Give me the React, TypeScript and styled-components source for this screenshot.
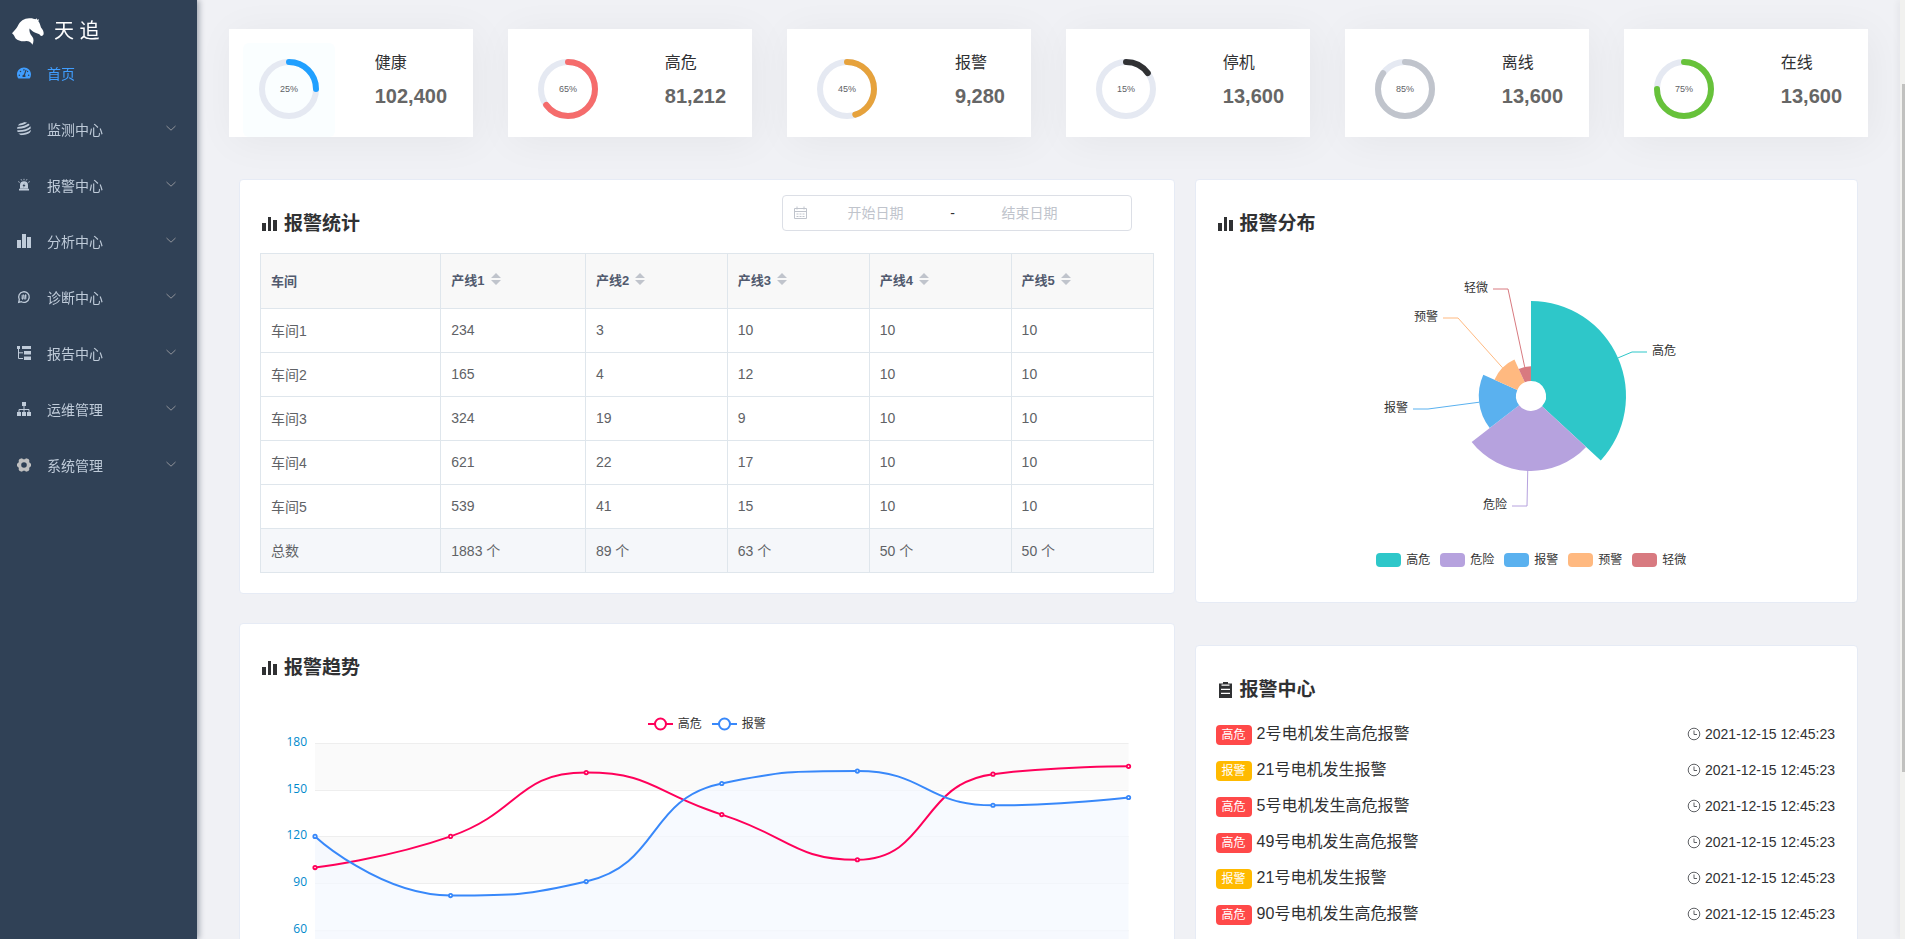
import React from "react";
import styled, { createGlobalStyle } from "styled-components";
import { FaTachometerAlt } from "react-icons/fa";

const GlobalStyle = createGlobalStyle`
  *, *::before, *::after { box-sizing: border-box; }
  body {
    margin: 0;
    font-family: "Liberation Sans", Arial, "Noto Sans CJK SC", sans-serif;
    font-size: 14px;
    color: #303133;
    background: #f0f2f5;
  }
  h1, h2, p, ul { margin: 0; padding: 0; }
  ul { list-style: none; }
  svg { display: block; flex: none; }
`;

/* ---------- shell ---------- */

const Shell = styled.div`
  display: flex;
  height: 100vh;
`;

const Sidebar = styled.aside`
  z-index: 1;
  flex: 0 0 197px;
  background: #304156;
  box-shadow: 2px 0 6px rgba(0, 21, 41, 0.35);
`;

const Brand = styled.h1`
  display: flex;
  align-items: center;
  gap: 10px;
  height: 45px;
  padding: 17px 12px 0;
  color: #fff;
  font-size: 20px;
  line-height: 28px;
  font-weight: 400;
`;

const NavLink = styled.a<{ $active?: boolean }>`
  display: flex;
  align-items: center;
  gap: 16px;
  height: 56px;
  padding: 0 21px 0 17px;
  color: ${(p) => (p.$active ? "#409eff" : "#bfcbd9")};
  text-decoration: none;
`;

const NavText = styled.span`
  flex: 1;
`;

const Main = styled.main`
  flex: 1;
  min-width: 0;
  padding: 29px 32px 30px;
  overflow-y: auto;
  scrollbar-width: none;
  background: #f0f1f5;
`;

const ScrollTrack = styled.div`
  display: grid;
  grid-template-rows: 84fr 688fr 167fr;
  flex: 0 0 5px;
  padding-left: 2px;
  background: #f1f1ef;
  box-shadow: -2px 0 6px rgba(0, 21, 41, 0.06);
`;

const ScrollThumb = styled.div`
  grid-row: 2;
  background: #c1c1bf;
`;

/* ---------- status cards ---------- */

const CardRow = styled.section`
  display: grid;
  grid-template-columns: repeat(6, minmax(0, 1fr));
  gap: 35px;
`;

const StatCard = styled.article`
  display: flex;
  justify-content: space-between;
  height: 108px;
  padding: 14px 26px 0 14px;
  background: #fff;
  box-shadow: 4px 4px 40px rgba(0, 0, 0, 0.05);
`;

const RingBox = styled.div<{ $tinted?: boolean }>`
  padding: 16px;
  border-radius: 6px;
  background: ${(p) => (p.$tinted ? "#fafeff" : "transparent")};
`;

const RingText = styled.text`
  font-size: 9px;
  fill: #606266;
  text-anchor: middle;
`;

const StatInfo = styled.div`
  padding-top: 11px;
`;

const StatLabel = styled.p`
  margin-bottom: 12px;
  font-size: 16px;
  line-height: 18px;
`;

const StatValue = styled.p`
  color: #666;
  font-size: 20px;
  line-height: 24px;
  font-weight: 700;
`;

/* ---------- panels ---------- */

const PanelGrid = styled.div`
  display: grid;
  grid-template-columns: minmax(0, 935fr) minmax(0, 663fr);
  align-items: start;
  gap: 20px;
  margin: 42px 10px 0;
`;

const Column = styled.div<{ $gap: number }>`
  display: flex;
  flex-direction: column;
  gap: ${(p) => p.$gap}px;
`;

const Panel = styled.section`
  padding: 15px 20px 20px;
  border: 1px solid #e6ebf5;
  border-radius: 4px;
  background: #fff;
`;

const PanelHeader = styled.header`
  display: flex;
  justify-content: space-between;
  align-items: flex-start;
  height: 58px;
`;

const PanelTitle = styled.h2`
  display: flex;
  align-items: center;
  gap: 6px;
  padding-top: 17px;
  font-size: 19px;
  line-height: 24px;
  font-weight: 700;
`;

const DateRange = styled.div`
  display: flex;
  align-items: center;
  width: 350px;
  height: 36px;
  margin-right: 22px;
  padding: 0 10px;
  border: 1px solid #dcdfe6;
  border-radius: 4px;
`;

const DateInput = styled.input`
  width: 136px;
  height: 28px;
  padding: 0;
  border: 0;
  outline: 0;
  background: none;
  color: #606266;
  font: inherit;
  text-align: center;
  &::placeholder { color: #c0c4cc; opacity: 1; }
`;

const DateSeparator = styled.span`
  width: 18px;
  text-align: center;
`;

/* ---------- table ---------- */

const Table = styled.table`
  width: 100%;
  border-collapse: collapse;
  table-layout: fixed;
  color: #606266;
`;

const HeadCell = styled.th`
  height: 55px;
  padding: 0 10px 2px;
  border: 1px solid #dfe6ec;
  background: #f8f8f8;
  color: #515a6e;
  font-size: 13px;
  text-align: left;
`;

const Cell = styled.td<{ $total?: boolean }>`
  height: 44px;
  padding: 0 10px 2px;
  border: 1px solid #dfe6ec;
  background: ${(p) => (p.$total ? "#f5f7fa" : "#fff")};
`;

const SortButton = styled.button`
  display: flex;
  align-items: center;
  gap: 6px;
  padding: 0 0 2px;
  border: 0;
  background: none;
  color: inherit;
  font: inherit;
  cursor: pointer;
`;

/* ---------- charts ---------- */

const ChartText = styled.text`
  font-size: 12px;
  fill: #333;
`;

const AxisText = styled.text`
  font-family: "Open Sans", sans-serif;
  font-size: 12px;
  fill: #008acd;
  text-anchor: end;
`;

const Legend = styled.ul`
  display: flex;
  justify-content: center;
  gap: 10px;
`;

const LegendItem = styled.li`
  display: flex;
  align-items: center;
  gap: 5px;
  height: 14px;
  color: #333;
  font-size: 12px;
  line-height: 14px;
`;

const Swatch = styled.i<{ $color: string }>`
  width: 25px;
  height: 14px;
  border-radius: 4px;
  background: ${(p) => p.$color};
`;

const PieBox = styled.div`
  display: flex;
  flex-direction: column;
  align-items: center;
  gap: 14px;
  padding: 0 0 15px 10px;
`;

const TrendBox = styled.div`
  padding-top: 20px;
`;

const TrendSvg = styled.svg`
  width: 100%;
  height: auto;
`;

/* ---------- alarm list ---------- */

const AlarmList = styled.ul`
  padding: 6px 2px 0 0;
`;

const AlarmRow = styled.li`
  display: flex;
  align-items: center;
  gap: 5px;
  height: 20px;
  margin-bottom: 16px;
`;

const Tag = styled.span<{ $danger: boolean }>`
  padding: 0 6px;
  border-radius: 4px;
  background: ${(p) => (p.$danger ? "#ff4949" : "#ffba00")};
  color: #fff;
  font-size: 12px;
  line-height: 20px;
`;

const AlarmText = styled.span`
  flex: 1;
  padding-bottom: 2px;
  font-size: 16px;
  line-height: 20px;
`;

const AlarmTime = styled.time`
  display: flex;
  align-items: center;
  gap: 4px;
  padding-bottom: 2px;
`;

/* ---------- icons ---------- */

const HorseLogo = () => (
  <svg width="32" height="27" viewBox="36 50 97 82" fill="currentColor" aria-hidden="true">
    <path d="M36 96C44 88 49 82 53 75 60 60 73 51 88 51 97 50 103 53 107 54L111 51 112 55 118 54 116 60C121 66 122 73 124 79 129 84 133 92 132 98 131 104 126 106 122 103 119 98 112 97 107 95 100 93 95 86 89 82 88 90 90 98 97 106 103 113 102 122 98 131 95 125 88 120 79 120 67 122 54 119 47 112 43 107 44 102 36 96Z" />
  </svg>
);

const GlobeIcon = () => (
  <svg width="14" height="14" viewBox="0 0 14 14" aria-hidden="true">
    <defs>
      <clipPath id="globe"><circle cx="7" cy="7" r="7" /></clipPath>
    </defs>
    <g clipPath="url(#globe)" fill="none" stroke="currentColor" strokeWidth="1.8">
      <path d="M1 2.600Q6 2.600 10 -.5M0 5.800Q8 6 13 1.500M0 9.100Q9 9.600 14.500 4.600M1 12.300Q10 12.800 15 8" />
    </g>
  </svg>
);

const SirenIcon = () => (
  <svg width="14" height="14" viewBox="0 0 14 14" aria-hidden="true">
    <path
      fill="currentColor"
      fillRule="evenodd"
      d="M3 10.500V7.200a4 4 0 0 1 8 0v3.300ZM7.500 5.200 5.500 8h1.200l-.3 1.800L8.500 7H7.200ZM2 10.800h10V12.500H2Z"
    />
    <path d="M7 .8v1.500M4 1.200l.8 1.300M10 1.200l-.8 1.300M1.300 3.600l1.400.8M12.700 3.600l-1.400.8" stroke="currentColor" strokeWidth=".9" />
  </svg>
);

const BarsIcon = () => (
  <svg width="14" height="14" viewBox="0 0 14 14" fill="currentColor" aria-hidden="true">
    <path d="M0 6h4v8H0zM5 0h4v14H5zM10 3h4v11h-4z" />
  </svg>
);

const HashIcon = () => (
  <svg width="14" height="14" viewBox="0 0 14 14" fill="none" stroke="currentColor" aria-hidden="true">
    <path strokeWidth="1.3" d="M1.700 12.300 2.300 9.600A5.300 5.300 0 1 1 4.400 11.700Z" />
    <path strokeWidth="1.100" d="M6.300 4.300 5.500 9.700M8.700 4.300 7.900 9.700M4.300 6h5.400M4.200 8h5.400" />
  </svg>
);

const TreeIcon = () => (
  <svg width="14" height="14" viewBox="0 0 14 14" aria-hidden="true">
    <path fill="currentColor" d="M0 0h3v3H0zM5 0h9v3H5zM7 5h7v3.500H7zM7 10.500h7V14H7z" />
    <path fill="none" stroke="currentColor" d="M1.500 3v9.500H6M1.500 6.800H6" />
  </svg>
);

const OrgIcon = () => (
  <svg width="14" height="14" viewBox="0 0 14 14" aria-hidden="true">
    <path fill="currentColor" d="M5 0h4v4H5zM0 10h4v4H0zM5 10h4v4H5zM10 10h4v4h-4z" />
    <path fill="none" stroke="currentColor" d="M7 4v6M2 10V7.500h10V10" />
  </svg>
);

const GearIcon = () => (
  <svg width="14" height="14" viewBox="0 0 14 14" fill="#c0c0c0" aria-hidden="true">
    <path
      fillRule="evenodd"
      d="M2.600 .9 5 .3 6 1.200H8L9 .3 11.400 .9 12.300 2.300 12.200 4 12.900 5 14 5.800V8.200L12.900 9 12.200 10 12.300 11.700 11.400 13.100 9 13.700 8 12.800H6L5 13.700 2.600 13.100 1.700 11.700 1.800 10 1.100 9 0 8.200V5.800L1.100 5 1.800 4 1.700 2.300ZM7 4.200a2.800 2.800 0 1 0 0 5.600 2.800 2.800 0 1 0 0-5.600Z"
    />
  </svg>
);

const Chevron = () => (
  <svg width="10" height="10" viewBox="0 0 10 10" fill="none" stroke="#909399" aria-hidden="true">
    <path d="M.5 2 5 6.200 9.500 2" />
  </svg>
);

const TitleBars = () => (
  <svg width="18" height="18" viewBox="0 0 18 18" fill="currentColor" aria-hidden="true">
    <path d="M2 8h4v8H2zM8 2h3v14H8zM13 5h4v11h-4z" />
  </svg>
);

const TitleClipboard = () => (
  <svg width="18" height="18" viewBox="0 0 18 18" aria-hidden="true">
    <path fill="currentColor" d="M7 1h5v1.500h4V17H3V2.500h4z" />
    <path stroke="#fff" strokeWidth="1.200" d="M5.500 4.200h8M5 8.300h9M5 12.300h9" />
  </svg>
);

const CalendarIcon = () => (
  <svg width="15" height="14" viewBox="0 0 15 14" fill="none" stroke="#c0c4cc" aria-hidden="true">
    <path d="M1.500 2.500h12v10h-12zM1.500 5.500h12M4 .5v3M11 .5v3M3.500 8h2M6.500 8h2M9.500 8h2M3.500 10.500h2M6.500 10.500h2M9.500 10.500h2" />
  </svg>
);

const ClockIcon = () => (
  <svg width="14" height="14" viewBox="0 0 14 14" fill="none" stroke="#606266" aria-hidden="true">
    <circle cx="7" cy="7" r="5.800" />
    <path d="M7 3.500v4h3" />
  </svg>
);

const SortIcon = () => (
  <svg width="10" height="14" viewBox="0 0 10 14" fill="#c0c4cc" aria-hidden="true">
    <path d="M0 6 5 1l5 5zM0 8h10l-5 5z" />
  </svg>
);

/* ---------- data ---------- */

const navItems = [
  { label: "首页", icon: <FaTachometerAlt size={14} />, active: true },
  { label: "监测中心", icon: <GlobeIcon /> },
  { label: "报警中心", icon: <SirenIcon /> },
  { label: "分析中心", icon: <BarsIcon /> },
  { label: "诊断中心", icon: <HashIcon /> },
  { label: "报告中心", icon: <TreeIcon /> },
  { label: "运维管理", icon: <OrgIcon /> },
  { label: "系统管理", icon: <GearIcon /> },
];

const stats = [
  { label: "健康", value: "102,400", percent: 25, color: "#20a0ff" },
  { label: "高危", value: "81,212", percent: 65, color: "#f56c6c" },
  { label: "报警", value: "9,280", percent: 45, color: "#e6a23c" },
  { label: "停机", value: "13,600", percent: 15, color: "#303133" },
  { label: "离线", value: "13,600", percent: 85, color: "#c0c4cc" },
  { label: "在线", value: "13,600", percent: 75, color: "#67c23a" },
];

const lines = ["产线1", "产线2", "产线3", "产线4", "产线5"];
const columnWidths = ["20.2%", "16.2%", "15.9%", "15.9%", "15.9%", "15.9%"];
const rows = [
  ["车间1", 234, 3, 10, 10, 10],
  ["车间2", 165, 4, 12, 10, 10],
  ["车间3", 324, 19, 9, 10, 10],
  ["车间4", 621, 22, 17, 10, 10],
  ["车间5", 539, 41, 15, 10, 10],
];
const totals = ["总数", "1883 个", "89 个", "63 个", "50 个", "50 个"];

const pieData = [
  { name: "高危", value: 320, color: "#2ec7c9", bend: [101, -44] },
  { name: "危险", value: 240, color: "#b6a2de", bend: [-4, 110] },
  { name: "报警", value: 149, color: "#5ab1ef", bend: [-103, 13] },
  { name: "预警", value: 100, color: "#ffb980", bend: [-73, -78] },
  { name: "轻微", value: 59, color: "#d87a80", bend: [-23, -107] },
];

const trendData = [
  { name: "高危", color: "#ff005a", values: [100, 120, 161, 134, 105, 160, 165] },
  { name: "报警", color: "#3888fa", values: [120, 82, 91, 154, 162, 140, 145] },
];

const alarmTime = "2021-12-15 12:45:23";
const alarms = [
  { level: "高危", text: "2号电机发生高危报警" },
  { level: "报警", text: "21号电机发生报警" },
  { level: "高危", text: "5号电机发生高危报警" },
  { level: "高危", text: "49号电机发生高危报警" },
  { level: "报警", text: "21号电机发生报警" },
  { level: "高危", text: "90号电机发生高危报警" },
];

/* ---------- chart components ---------- */

function Ring({ percent, color }: { percent: number; color: string }) {
  return (
    <svg width="60" height="60" viewBox="0 0 60 60" role="img" aria-label={`${percent}%`}>
      <circle cx="30" cy="30" r="27" fill="none" stroke="#e5e9f2" strokeWidth="6" />
      <circle
        cx="30"
        cy="30"
        r="27"
        fill="none"
        stroke={color}
        strokeWidth="6"
        strokeLinecap="round"
        pathLength={100}
        strokeDasharray={`${percent} 100`}
        transform="rotate(-90 30 30)"
      />
      <RingText x="30" y="33">{percent}%</RingText>
    </svg>
  );
}

const polar = (angle: number, r: number) => [r * Math.sin(angle), -r * Math.cos(angle)];

function RosePie() {
  const total = pieData.reduce((sum, d) => sum + d.value, 0);
  const inner = 15;
  const outer = 95;
  let start = 0;
  return (
    <svg width="340" height="286" viewBox="-170 -143 340 286" role="img" aria-label="报警分布">
      {pieData.map((d) => {
        const end = start + (d.value / total) * Math.PI * 2;
        const mid = (start + end) / 2;
        const r = inner + ((outer - inner) * d.value) / pieData[0].value;
        const path = [
          `M${polar(start, inner)}L${polar(start, r)}`,
          `A${r} ${r} 0 0 1 ${polar(end, r)}L${polar(end, inner)}`,
          `A${inner} ${inner} 0 0 0 ${polar(start, inner)}Z`,
        ].join("");
        start = end;
        const side = d.bend[0] > 0 ? 1 : -1;
        const lineEnd = d.bend[0] + 15 * side;
        return (
          <g key={d.name}>
            <path d={path} fill={d.color} />
            <path d={`M${polar(mid, r)}L${d.bend}H${lineEnd}`} fill="none" stroke={d.color} />
            <ChartText x={lineEnd + 5 * side} y={d.bend[1] + 3} textAnchor={side > 0 ? "start" : "end"}>
              {d.name}
            </ChartText>
          </g>
        );
      })}
    </svg>
  );
}

type Point = { x: number; y: number };

const clamp = (v: number, a: number, b: number) => Math.max(Math.min(a, b), Math.min(Math.max(a, b), v));

/* Bezier through all the points; handles never leave the box of their own segment. */
function smoothPath(pts: Point[]) {
  let d = `M${pts[0].x} ${pts[0].y}`;
  let handle = pts[0];
  for (let i = 1; i < pts.length; i++) {
    const prev = pts[i - 1];
    const cur = pts[i];
    const next = pts[i + 1];
    let before = cur;
    let after = cur;
    if (next) {
      const lp = Math.hypot(cur.x - prev.x, cur.y - prev.y);
      const ln = Math.hypot(next.x - cur.x, next.y - cur.y);
      const k = (0.5 * ln) / (ln + lp);
      const ax = clamp(cur.x + (next.x - prev.x) * k, cur.x, next.x);
      const ay = clamp(cur.y + (next.y - prev.y) * k, cur.y, next.y);
      before = {
        x: clamp(cur.x - ((ax - cur.x) * lp) / ln, prev.x, cur.x),
        y: clamp(cur.y - ((ay - cur.y) * lp) / ln, prev.y, cur.y),
      };
      after = {
        x: cur.x + ((cur.x - before.x) * ln) / lp,
        y: cur.y + ((cur.y - before.y) * ln) / lp,
      };
    }
    d += `C${handle.x} ${handle.y} ${before.x} ${before.y} ${cur.x} ${cur.y}`;
    handle = after;
  }
  return d;
}

const plot = { left: 55, right: 868, top: 12, bottom: 292, max: 180 };

function TrendChart() {
  const yOf = (v: number) => plot.bottom - (v / plot.max) * (plot.bottom - plot.top);
  const series = trendData.map((s) => {
    const points = s.values.map((v, i) => ({
      x: plot.left + ((plot.right - plot.left) * i) / (s.values.length - 1),
      y: yOf(v),
    }));
    return { ...s, points, path: smoothPath(points) };
  });
  const ticks = [0, 30, 60, 90, 120, 150, 180];
  return (
    <TrendSvg viewBox="0 0 893 322" role="img" aria-label="报警趋势">
      {ticks.slice(1).map((t, i) => (
        <rect
          key={t}
          x={plot.left}
          y={yOf(t)}
          width={plot.right - plot.left}
          height={yOf(0) - yOf(30)}
          fill={i % 2 ? "#fafafa" : "#fff"}
        />
      ))}
      {ticks.map((t) => (
        <React.Fragment key={t}>
          <path d={`M${plot.left} ${Math.round(yOf(t)) + 0.5}H${plot.right}`} stroke="#eee" />
          <AxisText x={plot.left - 8} y={yOf(t) + 3}>{t}</AxisText>
        </React.Fragment>
      ))}
      <path d={`${series[1].path}V${plot.bottom}H${plot.left}Z`} fill="#f3f8ff" fillOpacity="0.7" />
      {series.map((s) => (
        <g key={s.name} stroke={s.color}>
          <path d={s.path} fill="none" strokeWidth="2" />
          {s.points.map((p) => (
            <circle key={p.x} cx={p.x} cy={p.y} r="1.700" fill="#fff" strokeWidth="1.800" />
          ))}
        </g>
      ))}
    </TrendSvg>
  );
}

/* ---------- page ---------- */

export default function App() {
  return (
    <Shell>
      <GlobalStyle />
      <Sidebar>
        <Brand>
          <HorseLogo />
          天 追
        </Brand>
        <nav>
          {navItems.map((item) => (
            <NavLink key={item.label} href="#" $active={item.active}>
              {item.icon}
              <NavText>{item.label}</NavText>
              {!item.active && <Chevron />}
            </NavLink>
          ))}
        </nav>
      </Sidebar>

      <Main>
        <CardRow>
          {stats.map((s, i) => (
            <StatCard key={s.label}>
              <RingBox $tinted={i === 0}>
                <Ring percent={s.percent} color={s.color} />
              </RingBox>
              <StatInfo>
                <StatLabel>{s.label}</StatLabel>
                <StatValue>{s.value}</StatValue>
              </StatInfo>
            </StatCard>
          ))}
        </CardRow>

        <PanelGrid>
          <Column $gap={29}>
            <Panel>
              <PanelHeader>
                <PanelTitle><TitleBars />报警统计</PanelTitle>
                <DateRange>
                  <CalendarIcon />
                  <DateInput aria-label="开始日期" placeholder="开始日期" />
                  <DateSeparator>-</DateSeparator>
                  <DateInput aria-label="结束日期" placeholder="结束日期" />
                </DateRange>
              </PanelHeader>
              <Table>
                <colgroup>
                  {columnWidths.map((width, i) => <col key={i} width={width} />)}
                </colgroup>
                <thead>
                  <tr>
                    <HeadCell>车间</HeadCell>
                    {lines.map((name) => (
                      <HeadCell key={name}>
                        <SortButton type="button">{name}<SortIcon /></SortButton>
                      </HeadCell>
                    ))}
                  </tr>
                </thead>
                <tbody>
                  {rows.map((row) => (
                    <tr key={row[0]}>
                      {row.map((v, i) => <Cell key={i}>{v}</Cell>)}
                    </tr>
                  ))}
                </tbody>
                <tfoot>
                  <tr>
                    {totals.map((v, i) => <Cell key={i} $total>{v}</Cell>)}
                  </tr>
                </tfoot>
              </Table>
            </Panel>

            <Panel>
              <PanelHeader>
                <PanelTitle><TitleBars />报警趋势</PanelTitle>
              </PanelHeader>
              <TrendBox>
                <Legend>
                  {trendData.map((s) => (
                    <LegendItem key={s.name}>
                      <svg width="25" height="14" viewBox="0 0 25 14" stroke={s.color} strokeWidth="2" aria-hidden="true">
                        <path d="M0 7h25" />
                        <circle cx="12.5" cy="7" r="5.500" fill="#fff" />
                      </svg>
                      {s.name}
                    </LegendItem>
                  ))}
                </Legend>
                <TrendChart />
              </TrendBox>
            </Panel>
          </Column>

          <Column $gap={42}>
            <Panel>
              <PanelHeader>
                <PanelTitle><TitleBars />报警分布</PanelTitle>
              </PanelHeader>
              <PieBox>
                <RosePie />
                <Legend>
                  {pieData.map((d) => (
                    <LegendItem key={d.name}><Swatch $color={d.color} />{d.name}</LegendItem>
                  ))}
                </Legend>
              </PieBox>
            </Panel>

            <Panel>
              <PanelHeader>
                <PanelTitle><TitleClipboard />报警中心</PanelTitle>
              </PanelHeader>
              <AlarmList>
                {alarms.map((a, i) => (
                  <AlarmRow key={i}>
                    <Tag $danger={a.level === "高危"}>{a.level}</Tag>
                    <AlarmText>{a.text}</AlarmText>
                    <AlarmTime><ClockIcon />{alarmTime}</AlarmTime>
                  </AlarmRow>
                ))}
              </AlarmList>
            </Panel>
          </Column>
        </PanelGrid>
      </Main>
      <ScrollTrack aria-hidden="true"><ScrollThumb /></ScrollTrack>
    </Shell>
  );
}
